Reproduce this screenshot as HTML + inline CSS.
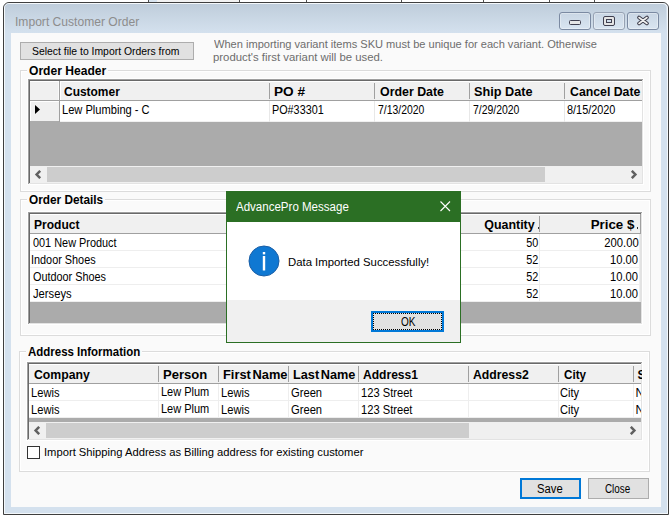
<!DOCTYPE html>
<html><head><meta charset="utf-8"><style>
html,body{margin:0;padding:0;width:671px;height:515px;overflow:hidden;background:#fff}
body>div,body>svg,body>span,div>span{position:absolute}
.t{position:absolute}
</style></head><body>
<div style="left:0px;top:0px;width:671px;height:515px;background:#ffffff;"></div>
<div style="left:149px;top:0px;width:8px;height:2px;background:#d8e4f0;"></div>
<div style="left:157px;top:0px;width:82px;height:2px;background:#f2f2f2;"></div>
<div style="left:148px;top:0px;width:1px;height:2px;background:#505050;"></div>
<div style="left:239px;top:0px;width:1px;height:2px;background:#505050;"></div>
<div style="left:306px;top:0px;width:1px;height:2px;background:#505050;"></div>
<div style="left:401px;top:0px;width:1px;height:2px;background:#505050;"></div>
<div style="left:483px;top:0px;width:1px;height:2px;background:#505050;"></div>
<div style="left:549px;top:0px;width:1px;height:2px;background:#505050;"></div>
<div style="left:594px;top:0px;width:1px;height:2px;background:#505050;"></div>
<div style="left:3px;top:2px;width:664px;height:511px;border:1px solid #3f3f3f;border-radius:6px 6px 0 0;background:#d4e1ee;"></div>
<div style="left:4px;top:3px;width:664px;height:511px;border:1px solid rgba(255,255,255,0.75);border-radius:5px 5px 0 0;box-sizing:border-box;"></div>
<div style="left:5px;top:4px;width:661px;height:29px;border-radius:4px 4px 0 0;background:linear-gradient(#bfcddb,#d4e1ee);"></div>
<div style="left:11px;top:33px;width:650px;height:474px;background:#fafafa;"></div>
<div style="left:559px;top:12px;width:32px;height:18px;box-sizing:border-box;border:1px solid #7b8aa2;border-radius:3px;background:linear-gradient(#c9d6e4,#d9e5f1);box-shadow:inset 0 0 0 1px rgba(255,255,255,0.35)"></div>
<div style="left:593px;top:12px;width:32px;height:18px;box-sizing:border-box;border:1px solid #97a2b3;border-radius:3px;background:linear-gradient(#c9d6e4,#d9e5f1);box-shadow:inset 0 0 0 1px rgba(255,255,255,0.35)"></div>
<div style="left:627px;top:12px;width:32px;height:18px;box-sizing:border-box;border:1px solid #7b8aa2;border-radius:3px;background:linear-gradient(#c9d6e4,#d9e5f1);box-shadow:inset 0 0 0 1px rgba(255,255,255,0.35)"></div>
<div style="left:569px;top:20px;width:12px;height:5px;box-sizing:border-box;border:1px solid #404050;border-radius:1.5px;background:#e6e6e6"></div>
<div style="left:603px;top:16px;width:12px;height:10px;box-sizing:border-box;border:1.5px solid #404050;border-radius:2px;background:#e4e4e4"></div>
<div style="left:606px;top:19px;width:6px;height:4px;box-sizing:border-box;border:1px solid #404050;background:#cfdcea"></div>
<svg style="position:absolute;left:636px;top:15px" width="14" height="12" viewBox="0 0 14 12"><path d="M3 2.5 L11 8.5 M11 2.5 L3 8.5" stroke="#3c3c4a" stroke-width="3.6" stroke-linecap="round"/><path d="M3 2.5 L11 8.5 M11 2.5 L3 8.5" stroke="#f0f0f0" stroke-width="1.6" stroke-linecap="round"/></svg>
<div style="left:20px;top:42px;width:174px;height:18px;background:#e1e1e1;box-sizing:border-box;border:1px solid #adadad;"></div>
<div style="left:20px;top:70px;width:1px;height:122px;background:#dcdcdc;"></div>
<div style="left:650px;top:70px;width:1px;height:122px;background:#dcdcdc;"></div>
<div style="left:20px;top:191px;width:631px;height:1px;background:#dcdcdc;"></div>
<div style="left:20px;top:70px;width:631px;height:1px;background:#dcdcdc;"></div>
<div style="left:21px;top:71px;width:1px;height:120px;background:#fff;"></div>
<div style="left:649px;top:71px;width:1px;height:120px;background:#fff;"></div>
<div style="left:21px;top:190px;width:629px;height:1px;background:#fff;"></div>
<div style="left:21px;top:71px;width:629px;height:1px;background:#fff;"></div>
<div style="left:27px;top:64px;width:81px;height:10px;background:#fafafa;"></div>
<div style="left:20px;top:199px;width:1px;height:137px;background:#dcdcdc;"></div>
<div style="left:650px;top:199px;width:1px;height:137px;background:#dcdcdc;"></div>
<div style="left:20px;top:335px;width:631px;height:1px;background:#dcdcdc;"></div>
<div style="left:20px;top:199px;width:631px;height:1px;background:#dcdcdc;"></div>
<div style="left:21px;top:200px;width:1px;height:135px;background:#fff;"></div>
<div style="left:649px;top:200px;width:1px;height:135px;background:#fff;"></div>
<div style="left:21px;top:334px;width:629px;height:1px;background:#fff;"></div>
<div style="left:21px;top:200px;width:629px;height:1px;background:#fff;"></div>
<div style="left:27px;top:193px;width:78px;height:10px;background:#fafafa;"></div>
<div style="left:19px;top:351px;width:1px;height:121px;background:#dcdcdc;"></div>
<div style="left:649px;top:351px;width:1px;height:121px;background:#dcdcdc;"></div>
<div style="left:19px;top:471px;width:631px;height:1px;background:#dcdcdc;"></div>
<div style="left:19px;top:351px;width:631px;height:1px;background:#dcdcdc;"></div>
<div style="left:20px;top:352px;width:1px;height:119px;background:#fff;"></div>
<div style="left:648px;top:352px;width:1px;height:119px;background:#fff;"></div>
<div style="left:20px;top:470px;width:629px;height:1px;background:#fff;"></div>
<div style="left:20px;top:352px;width:629px;height:1px;background:#fff;"></div>
<div style="left:26px;top:345px;width:116px;height:10px;background:#fafafa;"></div>
<div style="left:27px;top:78px;width:617px;height:1px;background:#fff;"></div>
<div style="left:27px;top:78px;width:1px;height:107px;background:#fff;"></div>
<div style="left:28px;top:79px;width:615px;height:1px;background:#a0a0a0;"></div>
<div style="left:28px;top:79px;width:1px;height:105px;background:#a0a0a0;"></div>
<div style="left:29px;top:80px;width:613px;height:1px;background:#696969;"></div>
<div style="left:29px;top:80px;width:1px;height:103px;background:#696969;"></div>
<div style="left:643px;top:79px;width:1px;height:106px;background:#fff;"></div>
<div style="left:28px;top:184px;width:616px;height:1px;background:#fff;"></div>
<div style="left:642px;top:80px;width:1px;height:104px;background:#e3e3e3;"></div>
<div style="left:29px;top:183px;width:614px;height:1px;background:#e3e3e3;"></div>
<div style="left:30px;top:81px;width:612px;height:102px;background:#ababab;"></div>
<div style="left:30px;top:81px;width:612px;height:19px;background:#f0f0f0;"></div>
<div style="left:30px;top:81px;width:612px;height:1px;background:#ffffff;"></div>
<div style="left:30px;top:100px;width:612px;height:1px;background:#a0a0a0;"></div>
<div style="left:59px;top:81px;width:1px;height:19px;background:#a0a0a0;"></div>
<div style="left:58px;top:82px;width:1px;height:18px;background:#fafafa;"></div>
<div style="left:269px;top:83px;width:1px;height:16px;background:#a0a0a0;"></div>
<div style="left:374px;top:83px;width:1px;height:16px;background:#a0a0a0;"></div>
<div style="left:469px;top:83px;width:1px;height:16px;background:#a0a0a0;"></div>
<div style="left:564px;top:83px;width:1px;height:16px;background:#a0a0a0;"></div>
<div style="left:60px;top:81px;width:1px;height:19px;background:#fff;"></div>
<div style="left:30px;top:101px;width:29px;height:20px;background:#f0f0f0;"></div>
<div style="left:30px;top:101px;width:29px;height:1px;background:#fff;"></div>
<div style="left:30px;top:101px;width:1px;height:20px;background:#fff;"></div>
<div style="left:59px;top:101px;width:1px;height:21px;background:#a0a0a0;"></div>
<div style="left:60px;top:101px;width:582px;height:21px;background:#fff;"></div>
<div style="left:60px;top:121px;width:582px;height:1px;background:#f0f0f0;"></div>
<div style="left:269px;top:101px;width:1px;height:21px;background:#e8e8e8;"></div>
<div style="left:374px;top:101px;width:1px;height:21px;background:#e8e8e8;"></div>
<div style="left:469px;top:101px;width:1px;height:21px;background:#e8e8e8;"></div>
<div style="left:564px;top:101px;width:1px;height:21px;background:#e8e8e8;"></div>
<svg style="position:absolute;left:34px;top:104px" width="8" height="12" viewBox="0 0 8 12"><path d="M1 1 L6 5.5 L1 10 Z" fill="#000"/></svg>
<div style="left:30px;top:166px;width:612px;height:17px;background:#f0f0f0;"></div>
<div style="left:47px;top:167px;width:498px;height:15px;background:#cdcdcd;"></div>
<svg style="position:absolute;left:34px;top:170px" width="9" height="9" viewBox="0 0 9 9"><path d="M6.2 0.8 L2.6 4.5 L6.2 8.2" fill="none" stroke="#606060" stroke-width="2.5"/></svg>
<svg style="position:absolute;left:629px;top:170px" width="9" height="9" viewBox="0 0 9 9"><path d="M2.8 0.8 L6.4 4.5 L2.8 8.2" fill="none" stroke="#606060" stroke-width="2.5"/></svg>
<div style="left:27px;top:211px;width:616px;height:1px;background:#fff;"></div>
<div style="left:27px;top:211px;width:1px;height:114px;background:#fff;"></div>
<div style="left:28px;top:212px;width:614px;height:1px;background:#a0a0a0;"></div>
<div style="left:28px;top:212px;width:1px;height:112px;background:#a0a0a0;"></div>
<div style="left:29px;top:213px;width:612px;height:1px;background:#696969;"></div>
<div style="left:29px;top:213px;width:1px;height:110px;background:#696969;"></div>
<div style="left:642px;top:212px;width:1px;height:113px;background:#fff;"></div>
<div style="left:28px;top:324px;width:615px;height:1px;background:#fff;"></div>
<div style="left:641px;top:213px;width:1px;height:111px;background:#e3e3e3;"></div>
<div style="left:29px;top:323px;width:613px;height:1px;background:#e3e3e3;"></div>
<div style="left:30px;top:214px;width:611px;height:109px;background:#ababab;"></div>
<div style="left:30px;top:214px;width:611px;height:19px;background:#f0f0f0;"></div>
<div style="left:30px;top:214px;width:611px;height:1px;background:#ffffff;"></div>
<div style="left:30px;top:233px;width:611px;height:1px;background:#a0a0a0;"></div>
<div style="left:539px;top:216px;width:1px;height:16px;background:#a0a0a0;"></div>
<div style="left:640px;top:214px;width:1px;height:19px;background:#a0a0a0;"></div>
<div style="left:30px;top:234px;width:611px;height:17px;background:#fff;"></div>
<div style="left:30px;top:250px;width:611px;height:1px;background:#eeeeee;"></div>
<div style="left:539px;top:234px;width:1px;height:17px;background:#eeeeee;"></div>
<div style="left:639px;top:234px;width:1px;height:17px;background:#eeeeee;"></div>
<div style="left:640px;top:234px;width:1px;height:17px;background:#e3e3e3;"></div>
<div style="left:30px;top:251px;width:611px;height:17px;background:#fff;"></div>
<div style="left:30px;top:267px;width:611px;height:1px;background:#eeeeee;"></div>
<div style="left:539px;top:251px;width:1px;height:17px;background:#eeeeee;"></div>
<div style="left:639px;top:251px;width:1px;height:17px;background:#eeeeee;"></div>
<div style="left:640px;top:251px;width:1px;height:17px;background:#e3e3e3;"></div>
<div style="left:30px;top:268px;width:611px;height:17px;background:#fff;"></div>
<div style="left:30px;top:284px;width:611px;height:1px;background:#eeeeee;"></div>
<div style="left:539px;top:268px;width:1px;height:17px;background:#eeeeee;"></div>
<div style="left:639px;top:268px;width:1px;height:17px;background:#eeeeee;"></div>
<div style="left:640px;top:268px;width:1px;height:17px;background:#e3e3e3;"></div>
<div style="left:30px;top:285px;width:611px;height:17px;background:#fff;"></div>
<div style="left:30px;top:301px;width:611px;height:1px;background:#eeeeee;"></div>
<div style="left:539px;top:285px;width:1px;height:17px;background:#eeeeee;"></div>
<div style="left:639px;top:285px;width:1px;height:17px;background:#eeeeee;"></div>
<div style="left:640px;top:285px;width:1px;height:17px;background:#e3e3e3;"></div>
<div style="left:538px;top:227px;width:1px;height:2px;background:#333;"></div>
<div style="left:637px;top:227px;width:1px;height:2px;background:#333;"></div>
<div style="left:26px;top:361px;width:617px;height:1px;background:#fff;"></div>
<div style="left:26px;top:361px;width:1px;height:80px;background:#fff;"></div>
<div style="left:27px;top:362px;width:615px;height:1px;background:#a0a0a0;"></div>
<div style="left:27px;top:362px;width:1px;height:78px;background:#a0a0a0;"></div>
<div style="left:28px;top:363px;width:613px;height:1px;background:#696969;"></div>
<div style="left:28px;top:363px;width:1px;height:76px;background:#696969;"></div>
<div style="left:642px;top:362px;width:1px;height:79px;background:#fff;"></div>
<div style="left:27px;top:440px;width:616px;height:1px;background:#fff;"></div>
<div style="left:641px;top:363px;width:1px;height:77px;background:#e3e3e3;"></div>
<div style="left:28px;top:439px;width:614px;height:1px;background:#e3e3e3;"></div>
<div style="left:29px;top:364px;width:612px;height:75px;background:#ababab;"></div>
<div style="left:29px;top:364px;width:612px;height:19px;background:#f0f0f0;"></div>
<div style="left:29px;top:364px;width:612px;height:1px;background:#ffffff;"></div>
<div style="left:29px;top:383px;width:612px;height:1px;background:#a0a0a0;"></div>
<div style="left:158px;top:366px;width:1px;height:16px;background:#a0a0a0;"></div>
<div style="left:218px;top:366px;width:1px;height:16px;background:#a0a0a0;"></div>
<div style="left:288px;top:366px;width:1px;height:16px;background:#a0a0a0;"></div>
<div style="left:358px;top:366px;width:1px;height:16px;background:#a0a0a0;"></div>
<div style="left:468px;top:366px;width:1px;height:16px;background:#a0a0a0;"></div>
<div style="left:558px;top:366px;width:1px;height:16px;background:#a0a0a0;"></div>
<div style="left:633px;top:366px;width:1px;height:16px;background:#a0a0a0;"></div>
<div style="left:29px;top:384px;width:612px;height:17px;background:#fff;"></div>
<div style="left:29px;top:400px;width:612px;height:1px;background:#eeeeee;"></div>
<div style="left:158px;top:384px;width:1px;height:17px;background:#eeeeee;"></div>
<div style="left:218px;top:384px;width:1px;height:17px;background:#eeeeee;"></div>
<div style="left:288px;top:384px;width:1px;height:17px;background:#eeeeee;"></div>
<div style="left:358px;top:384px;width:1px;height:17px;background:#eeeeee;"></div>
<div style="left:468px;top:384px;width:1px;height:17px;background:#eeeeee;"></div>
<div style="left:558px;top:384px;width:1px;height:17px;background:#eeeeee;"></div>
<div style="left:633px;top:384px;width:1px;height:17px;background:#eeeeee;"></div>
<div style="left:29px;top:401px;width:612px;height:17px;background:#fff;"></div>
<div style="left:29px;top:417px;width:612px;height:1px;background:#eeeeee;"></div>
<div style="left:158px;top:401px;width:1px;height:17px;background:#eeeeee;"></div>
<div style="left:218px;top:401px;width:1px;height:17px;background:#eeeeee;"></div>
<div style="left:288px;top:401px;width:1px;height:17px;background:#eeeeee;"></div>
<div style="left:358px;top:401px;width:1px;height:17px;background:#eeeeee;"></div>
<div style="left:468px;top:401px;width:1px;height:17px;background:#eeeeee;"></div>
<div style="left:558px;top:401px;width:1px;height:17px;background:#eeeeee;"></div>
<div style="left:633px;top:401px;width:1px;height:17px;background:#eeeeee;"></div>
<div style="left:29px;top:422px;width:612px;height:17px;background:#f0f0f0;"></div>
<div style="left:46px;top:423px;width:423px;height:15px;background:#cdcdcd;"></div>
<svg style="position:absolute;left:33px;top:426px" width="9" height="9" viewBox="0 0 9 9"><path d="M6.2 0.8 L2.6 4.5 L6.2 8.2" fill="none" stroke="#606060" stroke-width="2.5"/></svg>
<svg style="position:absolute;left:628px;top:426px" width="9" height="9" viewBox="0 0 9 9"><path d="M2.8 0.8 L6.4 4.5 L2.8 8.2" fill="none" stroke="#606060" stroke-width="2.5"/></svg>
<div style="left:27px;top:446px;width:13px;height:13px;background:#fff;box-sizing:border-box;border:1px solid #333;"></div>
<div style="left:520px;top:478px;width:61px;height:21px;background:#e1e1e1;box-sizing:border-box;border:2px solid #0078d7;"></div>
<div style="left:588px;top:478px;width:61px;height:21px;background:#e1e1e1;box-sizing:border-box;border:1px solid #adadad;"></div>
<div style="left:226px;top:191px;width:235px;height:152px;background:#2b6f24;"></div>
<div style="left:227px;top:222px;width:233px;height:78px;background:#ffffff;"></div>
<div style="left:227px;top:300px;width:233px;height:42px;background:#f0f0f0;"></div>
<svg style="position:absolute;left:439px;top:200px" width="13" height="13" viewBox="0 0 13 13"><path d="M1.5 1.5 L11 11 M11 1.5 L1.5 11" stroke="#fff" stroke-width="1.1"/></svg>
<svg style="position:absolute;left:248px;top:245px" width="32" height="32" viewBox="0 0 32 32"><circle cx="16" cy="16" r="15" fill="#0f78d2" stroke="#1b5fa6" stroke-width="1"/><rect x="14.8" y="7" width="2.4" height="2.4" fill="#fff"/><rect x="14.8" y="11" width="2.4" height="14.5" fill="#fff"/></svg>
<div style="left:371px;top:311px;width:73px;height:21px;background:#e1e1e1;box-sizing:border-box;border:2px solid #0078d7;"></div>
<div style="left:373px;top:313px;width:69px;height:17px;box-sizing:border-box;border:1px dotted #000;"></div>
<span class="t" id="t0" style="top:12px;font:normal 12px/20px 'Liberation Sans', sans-serif;color:#8d8d8d;white-space:pre;left:14.84px;transform-origin:0 0;transform:scaleX(1.0068);">Import Customer Order</span>
<span class="t" id="t1" style="top:41px;font:normal 11px/20px 'Liberation Sans', sans-serif;color:#000;white-space:pre;left:32.16px;transform-origin:0 0;transform:scaleX(0.9457);">Select file to Import Orders from</span>
<span class="t" id="t2" style="top:34px;font:normal 11px/20px 'Liberation Sans', sans-serif;color:#6d6d6d;white-space:pre;left:214.20px;transform-origin:0 0;transform:scaleX(1.0055);">When importing variant items SKU must be unique for each variant. Otherwise</span>
<span class="t" id="t3" style="top:47px;font:normal 11px/20px 'Liberation Sans', sans-serif;color:#6d6d6d;white-space:pre;left:213.40px;transform-origin:0 0;transform:scaleX(1.0321);">product's first variant will be used.</span>
<span class="t" id="t4" style="top:61px;font:bold 12px/20px 'Liberation Sans', sans-serif;color:#000;white-space:pre;left:28.98px;transform-origin:0 0;transform:scaleX(1.0066);">Order Header</span>
<span class="t" id="t5" style="top:190px;font:bold 12px/20px 'Liberation Sans', sans-serif;color:#000;white-space:pre;left:28.98px;transform-origin:0 0;transform:scaleX(0.9845);">Order Details</span>
<span class="t" id="t6" style="top:342px;font:bold 12px/20px 'Liberation Sans', sans-serif;color:#000;white-space:pre;left:28.08px;transform-origin:0 0;transform:scaleX(0.9561);">Address Information</span>
<span class="t" id="t7" style="top:82px;font:bold 12px/20px 'Liberation Sans', sans-serif;color:#000;white-space:pre;left:64.30px;transform-origin:0 0;transform:scaleX(0.9963);">Customer</span>
<span class="t" id="t8" style="top:82px;font:bold 12px/20px 'Liberation Sans', sans-serif;color:#000;white-space:pre;left:273.72px;transform-origin:0 0;transform:scaleX(1.1363);">PO #</span>
<span class="t" id="t9" style="top:82px;font:bold 12px/20px 'Liberation Sans', sans-serif;color:#000;white-space:pre;left:379.52px;transform-origin:0 0;transform:scaleX(1.0319);">Order Date</span>
<span class="t" id="t10" style="top:82px;font:bold 12px/20px 'Liberation Sans', sans-serif;color:#000;white-space:pre;left:473.50px;transform-origin:0 0;transform:scaleX(1.0563);">Ship Date</span>
<span class="t" id="t11" style="top:82px;font:bold 12px/20px 'Liberation Sans', sans-serif;color:#000;white-space:pre;left:569.74px;transform-origin:0 0;transform:scaleX(1.0247);">Cancel Date</span>
<span class="t" id="t12" style="top:100px;font:normal 12px/20px 'Liberation Sans', sans-serif;color:#000;white-space:pre;left:62.40px;transform-origin:0 0;transform:scaleX(0.9253);">Lew Plumbing - C</span>
<span class="t" id="t13" style="top:100px;font:normal 12px/20px 'Liberation Sans', sans-serif;color:#000;white-space:pre;left:272.40px;transform-origin:0 0;transform:scaleX(0.9003);">PO#33301</span>
<span class="t" id="t14" style="top:100px;font:normal 12px/20px 'Liberation Sans', sans-serif;color:#000;white-space:pre;left:378.20px;transform-origin:0 0;transform:scaleX(0.8692);">7/13/2020</span>
<span class="t" id="t15" style="top:100px;font:normal 12px/20px 'Liberation Sans', sans-serif;color:#000;white-space:pre;left:473.20px;transform-origin:0 0;transform:scaleX(0.8692);">7/29/2020</span>
<span class="t" id="t16" style="top:100px;font:normal 12px/20px 'Liberation Sans', sans-serif;color:#000;white-space:pre;left:567.08px;transform-origin:0 0;transform:scaleX(0.9068);">8/15/2020</span>
<span class="t" id="t17" style="top:215px;font:bold 12px/20px 'Liberation Sans', sans-serif;color:#000;white-space:pre;left:33.84px;transform-origin:0 0;transform:scaleX(1.0020);">Product</span>
<span class="t" id="t18" style="top:215px;font:bold 12px/20px 'Liberation Sans', sans-serif;color:#000;white-space:pre;right:136.64px;transform-origin:100% 0;transform:scaleX(1.0355);">Quantity</span>
<span class="t" id="t19" style="top:215px;font:bold 12px/20px 'Liberation Sans', sans-serif;color:#000;white-space:pre;right:36.52px;transform-origin:100% 0;transform:scaleX(1.1085);">Price $</span>
<span class="t" id="t20" style="top:233px;font:normal 12px/20px 'Liberation Sans', sans-serif;color:#000;white-space:pre;left:32.76px;transform-origin:0 0;transform:scaleX(0.9081);">001 New Product</span>
<span class="t" id="t21" style="top:233px;font:normal 12px/20px 'Liberation Sans', sans-serif;color:#000;white-space:pre;right:132.74px;transform-origin:100% 0;transform:scaleX(0.9017);">50</span>
<span class="t" id="t22" style="top:233px;font:normal 12px/20px 'Liberation Sans', sans-serif;color:#000;white-space:pre;right:32.28px;transform-origin:100% 0;transform:scaleX(0.9385);">200.00</span>
<span class="t" id="t23" style="top:250px;font:normal 12px/20px 'Liberation Sans', sans-serif;color:#000;white-space:pre;left:31.16px;transform-origin:0 0;transform:scaleX(0.9053);">Indoor Shoes</span>
<span class="t" id="t24" style="top:250px;font:normal 12px/20px 'Liberation Sans', sans-serif;color:#000;white-space:pre;right:132.74px;transform-origin:100% 0;transform:scaleX(0.9017);">52</span>
<span class="t" id="t25" style="top:250px;font:normal 12px/20px 'Liberation Sans', sans-serif;color:#000;white-space:pre;right:33.08px;transform-origin:100% 0;transform:scaleX(0.9330);">10.00</span>
<span class="t" id="t26" style="top:267px;font:normal 12px/20px 'Liberation Sans', sans-serif;color:#000;white-space:pre;left:32.76px;transform-origin:0 0;transform:scaleX(0.9045);">Outdoor Shoes</span>
<span class="t" id="t27" style="top:267px;font:normal 12px/20px 'Liberation Sans', sans-serif;color:#000;white-space:pre;right:132.74px;transform-origin:100% 0;transform:scaleX(0.9017);">52</span>
<span class="t" id="t28" style="top:267px;font:normal 12px/20px 'Liberation Sans', sans-serif;color:#000;white-space:pre;right:33.08px;transform-origin:100% 0;transform:scaleX(0.9330);">10.00</span>
<span class="t" id="t29" style="top:284px;font:normal 12px/20px 'Liberation Sans', sans-serif;color:#000;white-space:pre;left:32.76px;transform-origin:0 0;transform:scaleX(0.9339);">Jerseys</span>
<span class="t" id="t30" style="top:284px;font:normal 12px/20px 'Liberation Sans', sans-serif;color:#000;white-space:pre;right:132.74px;transform-origin:100% 0;transform:scaleX(0.9017);">52</span>
<span class="t" id="t31" style="top:284px;font:normal 12px/20px 'Liberation Sans', sans-serif;color:#000;white-space:pre;right:33.08px;transform-origin:100% 0;transform:scaleX(0.9330);">10.00</span>
<span class="t" id="t32" style="top:365px;font:bold 12px/20px 'Liberation Sans', sans-serif;color:#000;white-space:pre;left:33.76px;transform-origin:0 0;transform:scaleX(1.0205);">Company</span>
<span class="t" id="t33" style="top:365px;font:bold 12px/20px 'Liberation Sans', sans-serif;color:#000;white-space:pre;left:162.84px;transform-origin:0 0;transform:scaleX(1.0880);">Person</span>
<span class="t" id="t34" style="top:365px;font:bold 12px/20px 'Liberation Sans', sans-serif;color:#000;white-space:pre;word-spacing:-1.8px;left:223.06px;transform-origin:0 0;transform:scaleX(1.0700);">First Name</span>
<span class="t" id="t35" style="top:365px;font:bold 12px/20px 'Liberation Sans', sans-serif;color:#000;white-space:pre;word-spacing:-1.8px;left:293.40px;transform-origin:0 0;transform:scaleX(1.0597);">Last Name</span>
<span class="t" id="t36" style="top:365px;font:bold 12px/20px 'Liberation Sans', sans-serif;color:#000;white-space:pre;left:362.74px;transform-origin:0 0;transform:scaleX(1.0054);">Address1</span>
<span class="t" id="t37" style="top:365px;font:bold 12px/20px 'Liberation Sans', sans-serif;color:#000;white-space:pre;left:473.42px;transform-origin:0 0;transform:scaleX(1.0201);">Address2</span>
<span class="t" id="t38" style="top:365px;font:bold 12px/20px 'Liberation Sans', sans-serif;color:#000;white-space:pre;left:563.64px;transform-origin:0 0;transform:scaleX(0.9704);">City</span>
<div style="left:0;top:0;width:642px;height:515px;overflow:hidden"><span class="t" id="t39" style="top:365px;font:bold 12px/20px 'Liberation Sans', sans-serif;color:#000;white-space:pre;left:637.40px;transform-origin:0 0;">S</span></div>
<span class="t" id="t40" style="top:383px;font:normal 12px/20px 'Liberation Sans', sans-serif;color:#000;white-space:pre;left:30.84px;transform-origin:0 0;transform:scaleX(0.9273);">Lewis</span>
<span class="t" id="t41" style="top:382px;font:normal 12px/20px 'Liberation Sans', sans-serif;color:#000;white-space:pre;left:160.50px;transform-origin:0 0;transform:scaleX(0.9159);">Lew Plum</span>
<span class="t" id="t42" style="top:383px;font:normal 12px/20px 'Liberation Sans', sans-serif;color:#000;white-space:pre;left:220.84px;transform-origin:0 0;transform:scaleX(0.9273);">Lewis</span>
<span class="t" id="t43" style="top:383px;font:normal 12px/20px 'Liberation Sans', sans-serif;color:#000;white-space:pre;left:291.06px;transform-origin:0 0;transform:scaleX(0.9320);">Green</span>
<span class="t" id="t44" style="top:383px;font:normal 12px/20px 'Liberation Sans', sans-serif;color:#000;white-space:pre;left:360.84px;transform-origin:0 0;transform:scaleX(0.9288);">123 Street</span>
<span class="t" id="t45" style="top:383px;font:normal 12px/20px 'Liberation Sans', sans-serif;color:#000;white-space:pre;left:560.28px;transform-origin:0 0;transform:scaleX(0.9233);">City</span>
<div style="left:0;top:0;width:641px;height:515px;overflow:hidden"><span class="t" id="t46" style="top:383px;font:normal 12px/20px 'Liberation Sans', sans-serif;color:#000;white-space:pre;left:635.40px;transform-origin:0 0;">N</span></div>
<span class="t" id="t47" style="top:400px;font:normal 12px/20px 'Liberation Sans', sans-serif;color:#000;white-space:pre;left:30.84px;transform-origin:0 0;transform:scaleX(0.9273);">Lewis</span>
<span class="t" id="t48" style="top:399px;font:normal 12px/20px 'Liberation Sans', sans-serif;color:#000;white-space:pre;left:160.50px;transform-origin:0 0;transform:scaleX(0.9159);">Lew Plum</span>
<span class="t" id="t49" style="top:400px;font:normal 12px/20px 'Liberation Sans', sans-serif;color:#000;white-space:pre;left:220.84px;transform-origin:0 0;transform:scaleX(0.9273);">Lewis</span>
<span class="t" id="t50" style="top:400px;font:normal 12px/20px 'Liberation Sans', sans-serif;color:#000;white-space:pre;left:291.06px;transform-origin:0 0;transform:scaleX(0.9320);">Green</span>
<span class="t" id="t51" style="top:400px;font:normal 12px/20px 'Liberation Sans', sans-serif;color:#000;white-space:pre;left:360.84px;transform-origin:0 0;transform:scaleX(0.9288);">123 Street</span>
<span class="t" id="t52" style="top:400px;font:normal 12px/20px 'Liberation Sans', sans-serif;color:#000;white-space:pre;left:560.28px;transform-origin:0 0;transform:scaleX(0.9233);">City</span>
<div style="left:0;top:0;width:641px;height:515px;overflow:hidden"><span class="t" id="t53" style="top:400px;font:normal 12px/20px 'Liberation Sans', sans-serif;color:#000;white-space:pre;left:635.40px;transform-origin:0 0;">N</span></div>
<span class="t" id="t54" style="top:442px;font:normal 11px/20px 'Liberation Sans', sans-serif;color:#000;white-space:pre;left:43.84px;transform-origin:0 0;transform:scaleX(1.0183);">Import Shipping Address as Billing address for existing customer</span>
<span class="t" id="t55" style="top:479px;font:normal 12px/20px 'Liberation Sans', sans-serif;color:#000;white-space:pre;left:537.40px;transform-origin:0 0;transform:scaleX(0.9388);">Save</span>
<span class="t" id="t56" style="top:479px;font:normal 12px/20px 'Liberation Sans', sans-serif;color:#000;white-space:pre;left:604.98px;transform-origin:0 0;transform:scaleX(0.8216);">Close</span>
<span class="t" id="t57" style="top:197px;font:normal 12px/20px 'Liberation Sans', sans-serif;color:#fff;white-space:pre;left:235.76px;transform-origin:0 0;transform:scaleX(0.9608);">AdvancePro Message</span>
<span class="t" id="t58" style="top:252px;font:normal 11px/20px 'Liberation Sans', sans-serif;color:#000;white-space:pre;left:288.38px;transform-origin:0 0;transform:scaleX(1.0312);">Data Imported Successfully!</span>
<span class="t" id="t59" style="top:312px;font:normal 12px/20px 'Liberation Sans', sans-serif;color:#000;white-space:pre;left:400.98px;transform-origin:0 0;transform:scaleX(0.8317);">OK</span>
</body></html>
